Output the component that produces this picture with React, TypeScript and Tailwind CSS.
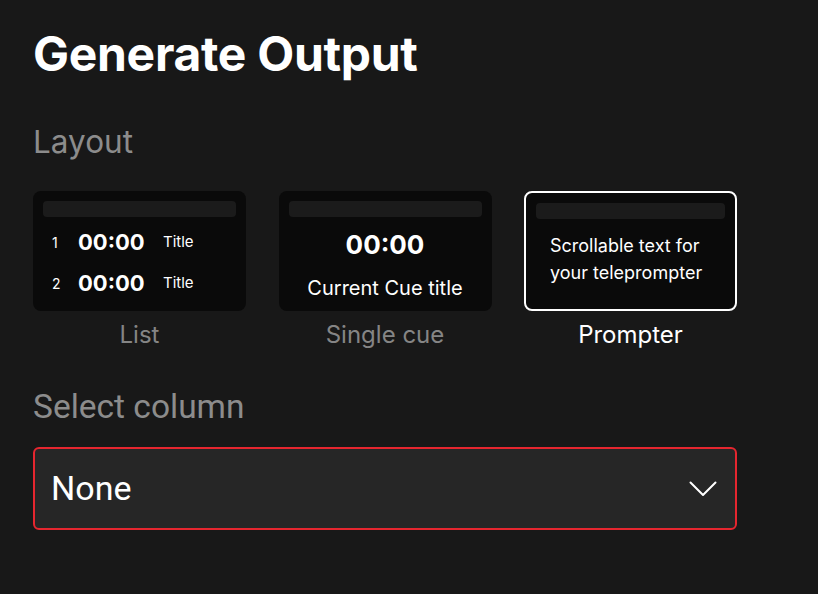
type LayoutOption = {
  id: string;
  label: string;
};

const options: LayoutOption[] = [
  { id: 'list', label: 'List' },
  { id: 'single', label: 'Single cue' },
  { id: 'prompter', label: 'Prompter' },
];

function Preview({ id }: { id: string }) {
  if (id === 'list') {
    return (
      <div className="flex flex-col gap-[15px] pl-[9px] pt-[12px]">
        {[1, 2].map((n) => (
          <div key={n} className="flex items-center">
            <span className="w-[26px] text-[14px] text-white">{n}</span>
            <span className="w-[85px] text-[22px] font-bold leading-[26px] text-white">00:00</span>
            <span className="text-[15px] text-white">Title</span>
          </div>
        ))}
      </div>
    );
  }
  if (id === 'single') {
    return (
      <div className="flex flex-col items-center pt-[12px]">
        <span className="text-[26px] font-bold leading-[32px] text-white">00:00</span>
        <span className="mt-[15px] text-[20px] leading-[24px] text-white">Current Cue title</span>
      </div>
    );
  }
  return (
    <div className="pl-[14px] pt-[13px] text-[18px] leading-[27px] text-white">
      Scrollable text for
      <br />
      your teleprompter
    </div>
  );
}

export default function App() {
  const selected = 'prompter';

  return (
    <div className="min-h-screen w-full bg-[#181818] px-[33px] pt-[28px] font-['Inter',sans-serif]">
      <h1 className="text-[48px] font-bold leading-[52px] tracking-[-0.3px] text-white">Generate Output</h1>

      <h2 className="mt-[43px] text-[31.5px] leading-[38px] text-[#8c8c8c]">Layout</h2>

      <div className="mt-[30px] flex gap-[32.5px]">
        {options.map((opt) => (
          <div key={opt.id} className="flex w-[213px] flex-col items-center">
            <div
              className={`h-[120px] w-full rounded-[8px] bg-[#0a0a0a] p-[10px] ${
                opt.id === selected ? 'border-2 border-white p-[8px]' : ''
              }`}
            >
              <div className="h-[16px] w-full rounded-[4px] bg-[#1b1b1b]" />
              <Preview id={opt.id} />
            </div>
            <span
              className={`mt-[9px] text-[24px] leading-[30px] ${
                opt.id === selected ? 'text-white' : 'text-[#858585]'
              }`}
            >
              {opt.label}
            </span>
          </div>
        ))}
      </div>

      <h2 className="mt-[38px] font-['Roboto',sans-serif] text-[33.5px] leading-[38px] text-[#8c8c8c]">Select column</h2>

      <div className="mt-[21px] flex h-[83px] w-[704px] items-center justify-between rounded-[6px] border-2 border-[#e5262f] bg-[#262626] pl-[16px] pr-[18px]">
        <span className="font-['Roboto',sans-serif] text-[34px] text-white">None</span>
        <svg width="28" height="16" viewBox="0 0 28 16" fill="none" stroke="white" strokeWidth="2" strokeLinecap="round" strokeLinejoin="round">
          <polyline points="1.5,1.5 14,14 26.5,1.5" />
        </svg>
      </div>
    </div>
  );
}
